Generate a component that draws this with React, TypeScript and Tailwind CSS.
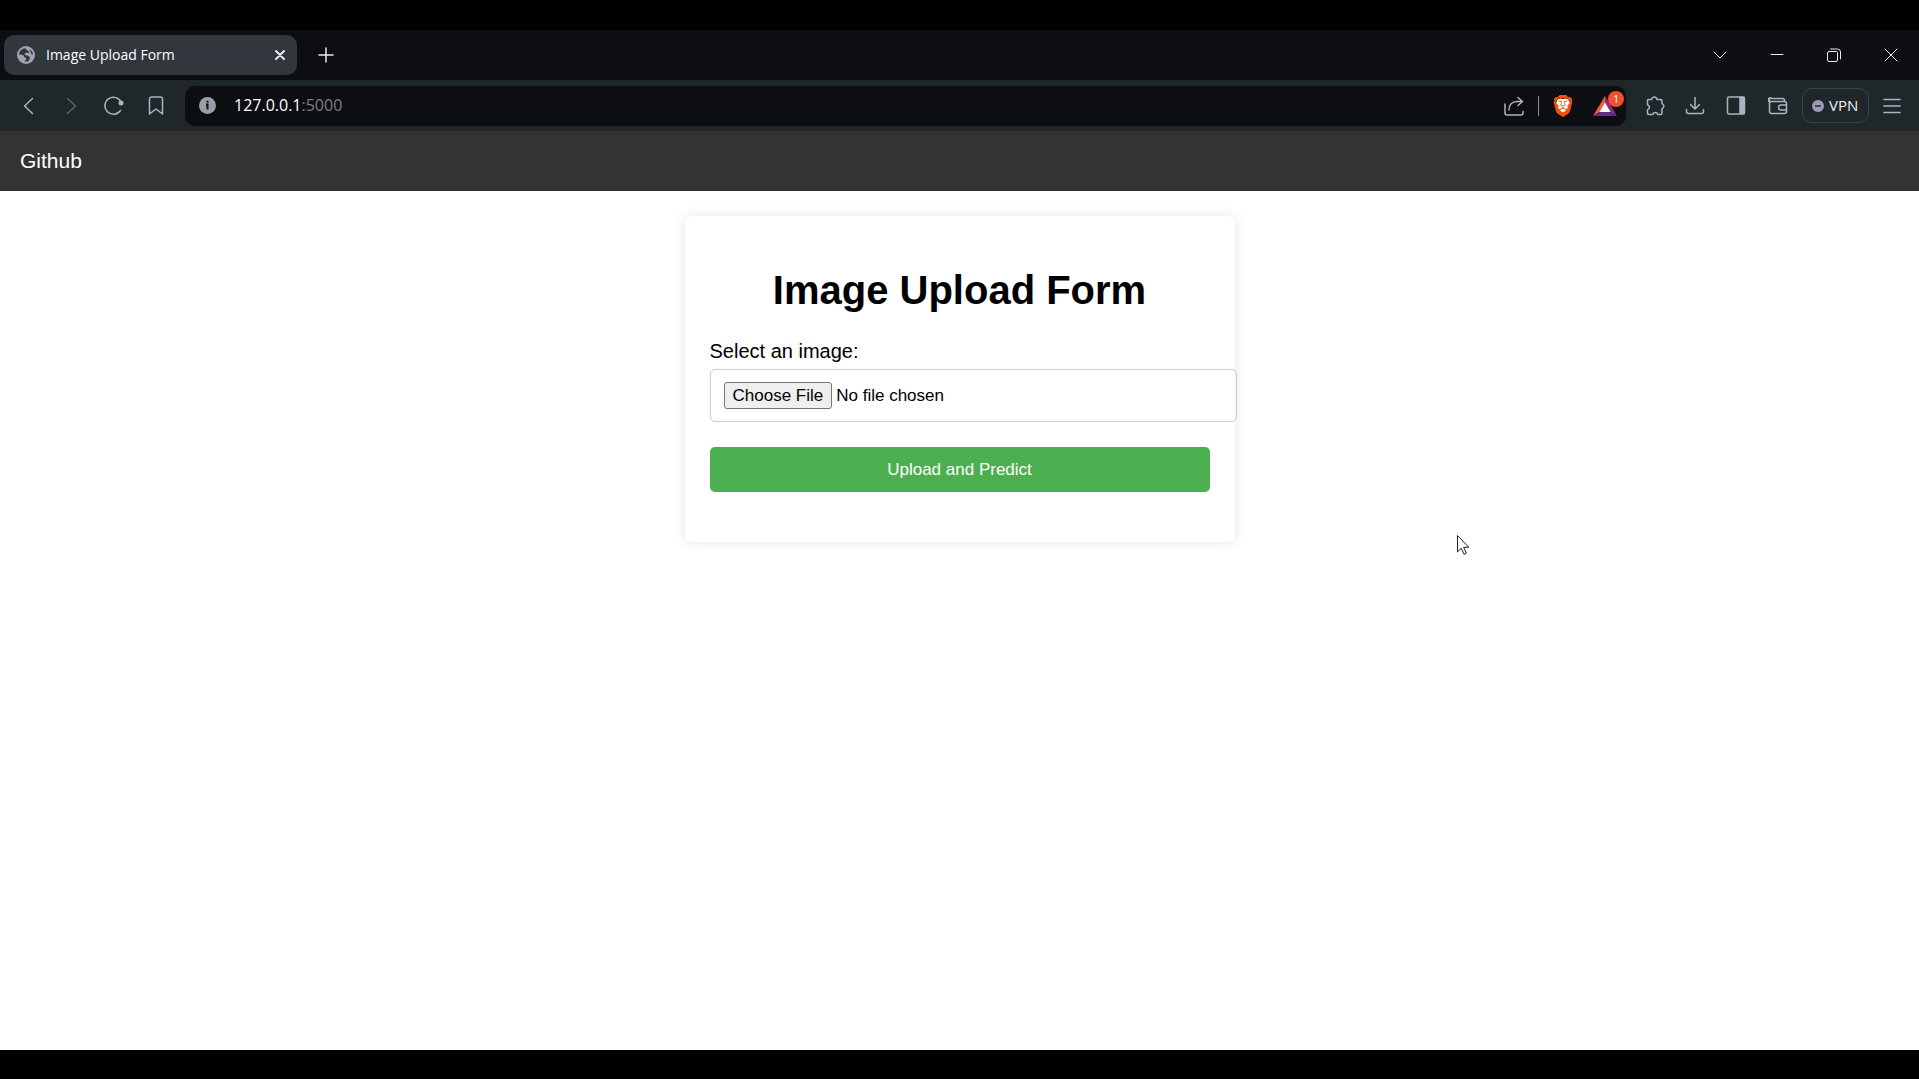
import React from "react";
import { SiBrave } from "react-icons/si";

type IconButtonProps = {
  label: string;
  className: string;
  children: React.ReactNode;
};

function IconButton({ label, className, children }: IconButtonProps) {
  return (
    <button type="button" aria-label={label} className={`flex h-10 shrink-0 items-center justify-center ${className}`}>
      {children}
    </button>
  );
}

function Line({ d, size = 20, width = 1.5 }: { d: string; size?: number; width?: number }) {
  return (
    <svg width={size} height={size} viewBox={`0 0 ${size} ${size}`} fill="none" stroke="currentColor" strokeWidth={width} strokeLinecap="round" strokeLinejoin="round">
      <path d={d} />
    </svg>
  );
}

function GlobeIcon() {
  return (
    <svg width="18" height="18" viewBox="0 0 18 18" className="shrink-0">
      <circle cx="9" cy="9" r="9" fill="#9ea3ae" />
      <path d="M8 2.2C5 2.6 2.3 5 2 8.500c2 .2 3.600.3 4.500 1 .8.700.3 1.600 1.400 1.900 1.400.3 1.300 1.200 1.200 2.100-.1.900-1 1.300-2 1.500 1.200.7 2.800.8 4.200.2.2-1.200 1.500-1.700 1.700-3 .2-1.300-.9-1.500-1.700-2.200-.9-.8-2.500-.2-3.300-.9-.700-.700-.200-1.800.900-2.100 1.300-.400 2.500.200 3.200-.500.700-.700-.100-1.300-.900-1.500C10.200 4.700 10 3.200 8 2.200Z" fill="#313740" />
      <path d="M12.500 3.200c.2 1.500.9 1.800 1.300 2.900.3 1-.1 1.700.9 2.200.5.3.9.3 1.300.2-.1-2.300-1.500-4.300-3.500-5.300Z" fill="#313740" />
    </svg>
  );
}

function TabStrip() {
  return (
    <header className="flex h-[50px] items-center bg-[#0d0e12] pl-1 text-[#e8eaee]">
      <div className="flex h-10 w-[293px] items-center rounded-[10px] bg-[#31373d] pl-[13px] pr-3">
        <GlobeIcon />
        <span className="ml-[11px] flex-1 pb-px text-sm leading-5 text-white">Image Upload Form</span>
        <button type="button" aria-label="Close tab" className="flex size-[10px] items-center justify-center">
          <Line size={10} width={2} d="M1 1l8 8M9 1L1 9" />
        </button>
      </div>
      <IconButton label="New tab" className="ml-[9px] w-10">
        <Line size={16} width={1.5} d="M8 1v14M1 8h14" />
      </IconButton>
      <div className="flex-1" />
      <IconButton label="Search tabs" className="w-[57px]">
        <Line size={14} width={1} d="M1 4l6 6 6-6" />
      </IconButton>
      <IconButton label="Minimize" className="w-[57px]">
        <Line size={14} width={1} d="M1 6.500h12" />
      </IconButton>
      <IconButton label="Restore" className="w-[57px]">
        <Line size={14} width={1} d="M2 3.500h7.500a1 1 0 0 1 1 1V12a1.500 1.500 0 0 1-1.500 1.500H2A1.500 1.500 0 0 1 .5 12V5A1.500 1.500 0 0 1 2 3.500M3.500 1h7a3 3 0 0 1 3 3v7" />
      </IconButton>
      <IconButton label="Close" className="w-[57px]">
        <Line size={14} width={1} d="M1 1l12 12M13 1L1 13" />
      </IconButton>
    </header>
  );
}

function AddressBar() {
  return (
    <div className="ml-2 flex h-10 flex-1 items-center rounded-[10px] bg-[#0d0e12]">
      <button type="button" aria-label="Site information" className="ml-[14px] shrink-0">
        <svg width="17" height="17" viewBox="0 0 17 17">
          <circle cx="8.500" cy="8.500" r="8.500" fill="#9b9ea8" />
          <path d="M8.500 3.700v1.800M7 7.500h1.500v5" stroke="#0d0e12" strokeWidth="2" fill="none" />
        </svg>
      </button>
      <a href="#address" className="ml-[18px] flex-1 pb-0.5 text-base leading-6 text-[#7d7f85]">
        <span className="text-white">127.0.0.1</span>:5000
      </a>
      <IconButton label="Share" className="w-[42px] text-[#b0b4bb]">
        <Line d="M1 8v9a2 2 0 0 0 2 2h14a2 2 0 0 0 2-2v-1.500M5 14c0-5 3-8.500 8-8.500h5M14 1.500l4.500 4-4.500 4" />
      </IconButton>
      <div className="mx-[3px] h-5 w-px bg-[#8b8e95]" />
      <IconButton label="Brave Shields" className="w-[42px] text-[#f4500b]">
        <span className="relative flex">
          <svg width="22" height="22" viewBox="0 0 22 22" className="absolute inset-0">
            <path d="M6 4h10l2 4-3 9-4 3-4-3-3-9Z" fill="#fff" />
          </svg>
          <SiBrave size={22} className="relative" />
        </span>
      </IconButton>
      <IconButton label="Brave Rewards, 1 notification" className="relative w-[42px]">
        <svg width="24" height="20" viewBox="0 0 24 20">
          <path d="M12 0 0 20l7.500-4.500L12 7.500Z" fill="#f2583a" />
          <path d="M12 0v7.500l4.500 8L24 20Z" fill="#962a83" />
          <path d="M0 20h24l-7.500-4.500h-9Z" fill="#5c2d91" />
          <path d="m12 6.500 5.500 9.500h-11Z" fill="#fff" />
        </svg>
        <span className="absolute right-[2px] top-[5px] flex size-4 items-center justify-center rounded-full bg-[#f1502f] text-[10px] leading-none text-white">1</span>
      </IconButton>
    </div>
  );
}

function Toolbar() {
  return (
    <nav aria-label="Browser toolbar" className="flex h-[51px] items-center bg-[#20272b] pl-2 text-[#a9b5bd]">
      <IconButton label="Back" className="w-[42px]">
        <Line d="M13.500 2.500 5.500 10l8 7.500" />
      </IconButton>
      <IconButton label="Forward" className="w-[42px] text-[#59616a]">
        <Line d="M6.500 2.500l8 7.500-8 7.500" />
      </IconButton>
      <IconButton label="Reload" className="w-[43px]">
        <svg width="20" height="20" viewBox="0 0 20 20" fill="none" stroke="currentColor" strokeWidth="1.500" strokeLinecap="round">
          <path d="M16.500 14.500A8.500 8.500 0 1 1 17.300 6.500" />
          <circle cx="17" cy="7" r="2.500" fill="currentColor" stroke="none" />
        </svg>
      </IconButton>
      <IconButton label="Bookmark" className="w-[42px]">
        <Line d="M5.500 1h9a2 2 0 0 1 2 2v15L10 13l-6.500 5V3a2 2 0 0 1 2-2Z" />
      </IconButton>
      <AddressBar />
      <IconButton label="Extensions" className="ml-2 w-[41px]">
        <Line d="M3.500 3.500h3.200a2.600 2.600 0 1 1 5.200 0h3.600a1.500 1.500 0 0 1 1.500 1.500v2.600a2.600 2.600 0 0 1 0 5V17a1.500 1.500 0 0 1-1.500 1.500h-2.700a2.600 2.600 0 0 0-5 0H4A1.500 1.500 0 0 1 2.500 17v-3.200a2.600 2.600 0 0 0 0-5V4.500a1 1 0 0 1 1-1Z" />
      </IconButton>
      <IconButton label="Downloads" className="w-[40px]">
        <Line d="M10 1.500v11M5.500 8.500 10 13l4.500-4.500M1.500 13.500v2a2 2 0 0 0 2 2h13a2 2 0 0 0 2-2v-2" />
      </IconButton>
      <IconButton label="Sidebar" className="w-[42px]">
        <svg width="20" height="20" viewBox="0 0 20 20" fill="none" stroke="currentColor" strokeWidth="1.500">
          <rect x="1.500" y="1" width="17" height="17" rx="1.500" />
          <path d="M14 1.500h4v16h-4z" fill="currentColor" />
        </svg>
      </IconButton>
      <IconButton label="Wallet" className="w-[42px]">
        <Line d="M1.500 3.500v12a2 2 0 0 0 2 2h13a2 2 0 0 0 2-2v-8a2 2 0 0 0-2-2H3.500a2 2 0 1 1 0-3h11a2 2 0 0 1 2 2v1M18.500 9h-5.500a2.500 2.500 0 0 0 0 5h5.500" />
      </IconButton>
      <button type="button" className="ml-[3px] flex h-[35px] w-[67px] shrink-0 items-center rounded-[10px] border border-[#3b4247] pl-[9px] text-[15px] leading-5 text-[#eef0f2]">
        <svg width="12" height="12" viewBox="0 0 12 12" className="mr-[5px] shrink-0">
          <circle cx="6" cy="6" r="6" fill="#9a9db3" />
          <path d="M3 6h6" stroke="#20272b" strokeWidth="1.500" />
        </svg>
        <span className="pb-0.5">VPN</span>
      </button>
      <IconButton label="Menu" className="mr-1 w-[46px]">
        <Line d="M2 3.500h16M2 10h16M2 16.500h16" />
      </IconButton>
    </nav>
  );
}

function UploadForm() {
  return (
    <form
      onSubmit={(event) => event.preventDefault()}
      className="mx-auto mt-[25px] w-full max-w-[550px] rounded-md bg-white px-[25px] pb-[50px] pt-[51px] shadow-[0_0_13px_rgba(0,0,0,0.1)]"
    >
      <h1 className="mb-[27px] text-center text-[40px] font-bold leading-[46px]">Image Upload Form</h1>
      <label htmlFor="image" className="mb-[6px] block text-xl leading-[23px]">
        Select an image:
      </label>
      <input
        id="image"
        type="file"
        accept="image/*"
        className="mb-[25px] block w-[calc(100%+27px)] rounded-[5px] border border-[#ccc] px-[13px] py-3 text-[17px] leading-5 file:mr-1 file:h-[27px] file:rounded-[3px] file:border file:border-solid file:border-[#767676] file:bg-[#efefef] file:px-2 file:text-[17px] file:leading-5 file:text-black"
      />
      <button type="submit" className="block h-[45px] w-full rounded-[5px] bg-[#4caf50] text-[17px] text-white">
        Upload and Predict
      </button>
    </form>
  );
}

export default function App() {
  return (
    <div className="relative flex min-h-screen flex-col bg-black pb-[29px] pt-[30px] font-['Open_Sans',sans-serif]">
      <TabStrip />
      <Toolbar />
      <div className="flex flex-1 flex-col bg-white font-['Liberation_Sans',Arial,sans-serif] text-black">
        <nav aria-label="Site" className="flex h-[60px] items-center bg-[#333] px-5">
          <a href="#github" className="text-[21px] text-white">
            Github
          </a>
        </nav>
        <main>
          <UploadForm />
        </main>
      </div>
      <svg width="13" height="21" viewBox="0 0 13 21" className="pointer-events-none absolute left-[1457px] top-[535px]" aria-hidden="true">
        <path d="M.5.500v16.300l3.700-3.500 2.800 6 2.400-1.100-2.700-5.900h5.100Z" fill="#fff" stroke="#222" />
      </svg>
    </div>
  );
}
